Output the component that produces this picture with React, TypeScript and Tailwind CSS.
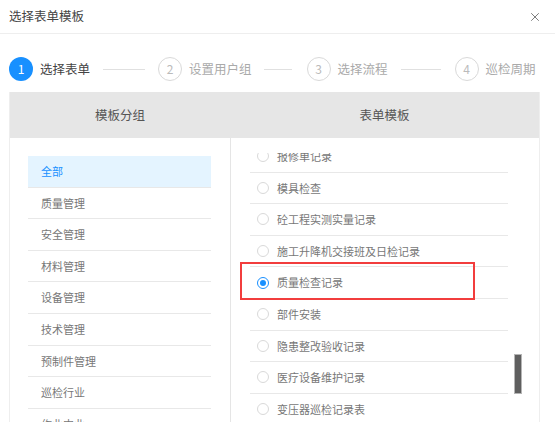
import { X } from "lucide-react";

const groups = ["全部", "质量管理", "安全管理", "材料管理", "设备管理", "技术管理", "预制件管理", "巡检行业", "作业内业"];

const templates = [
  "报修单记录",
  "模具检查",
  "砼工程实测实量记录",
  "施工升降机交接班及日检记录",
  "质量检查记录",
  "部件安装",
  "隐患整改验收记录",
  "医疗设备维护记录",
  "变压器巡检记录表",
  "消防设施检查",
];

const Step = ({ n, label, active }: { n: number; label: string; active?: boolean }) => (
  <div className="flex items-center gap-[7px]">
    <div
      className={
        active
          ? "w-[24px] h-[24px] rounded-full bg-[#1890ff] text-white flex items-center justify-center text-[12px]"
          : "w-[24px] h-[24px] rounded-full border border-[#d9d9d9] text-[#bbb] flex items-center justify-center text-[12px]"
      }
    >
      {n}
    </div>
    <span className={active ? "text-[12.5px] text-[#444]" : "text-[12.5px] text-[#aaa]"}>{label}</span>
  </div>
);

export default function App() {
  return (
    <div
      className="w-[555px] h-[422px] bg-white overflow-hidden"
      style={{ fontFamily: '"Noto Sans CJK SC", "Noto Sans", sans-serif' }}
    >
      {/* 标题栏 */}
      <div className="h-[34px] flex items-center justify-between pl-[9px] pr-[13px] border-b border-[#eee]">
        <span className="text-[12.5px] text-[#444]">选择表单模板</span>
        <X className="w-[14px] h-[14px] text-[#555]" strokeWidth={1.3} />
      </div>

      {/* 步骤条 */}
      <div className="flex items-center pl-[9px] pt-[23px] pb-[11px]">
        <Step n={1} label="选择表单" active />
        <div className="w-[42px] h-px bg-[#e0e0e0] ml-[13px] mr-[13px]" />
        <Step n={2} label="设置用户组" />
        <div className="w-[28px] h-px bg-[#e0e0e0] ml-[12px] mr-[15px]" />
        <Step n={3} label="选择流程" />
        <div className="w-[40px] h-px bg-[#e0e0e0] ml-[13px] mr-[14px]" />
        <Step n={4} label="巡检周期" />
      </div>

      {/* 面板 */}
      <div className="ml-[9px] w-[531px] h-[330px] border-l border-r border-[#eee] flex flex-col">
        <div className="h-[46px] bg-[#e6e6e6] flex shrink-0">
          <div className="w-[220px] flex items-center justify-center text-[12.5px] text-[#555]">模板分组</div>
          <div className="flex-1 flex items-center justify-center text-[12.5px] text-[#555]">表单模板</div>
        </div>
        <div className="flex flex-1 min-h-0">
          {/* 左侧分组 */}
          <div className="w-[221px] border-r border-[#e5e5e5] pt-[18px] pl-[18px] pr-[19px] overflow-hidden">
            {groups.map((g, i) => (
              <div
                key={g}
                className={
                  i === 0
                    ? "h-[31.6px] flex items-center pl-[13px] text-[11px] text-[#1890ff] bg-[#e4f4ff] border-b border-[#e8e8e8]"
                    : "h-[31.6px] flex items-center pl-[13px] text-[11px] text-[#777] border-b border-[#e8e8e8]"
                }
              >
                {g}
              </div>
            ))}
          </div>

          {/* 右侧模板 */}
          <div className="flex-1 relative pt-[15px]">
            <div className="h-full overflow-hidden pl-[19px] pr-[31px]">
              <div className="-mt-[12px]">
                {templates.map((t) => {
                  const sel = t === "质量检查记录";
                  return (
                    <div
                      key={t}
                      className="relative h-[31.6px] flex items-center gap-[8px] pl-[7px] border-b border-[#e8e8e8] text-[11px] text-[#777]"
                    >
                      {sel ? (
                        <span className="w-[12px] h-[12px] rounded-full border border-[#1890ff] flex items-center justify-center">
                          <span className="w-[6px] h-[6px] rounded-full bg-[#1890ff]" />
                        </span>
                      ) : (
                        <span className="w-[12px] h-[12px] rounded-full border border-[#d9d9d9]" />
                      )}
                      <span>{t}</span>
                      {sel && (
                        <div className="absolute left-[-10px] top-[-5px] w-[235px] h-[38px] border-2 border-[#f23d3d]" />
                      )}
                    </div>
                  );
                })}
              </div>
            </div>
            {/* 滚动条 */}
            <div className="absolute left-[283px] top-[216px] w-[8px] h-[40px] bg-[#5f5f5f] border border-[#b5b5b5]" />
          </div>
        </div>
      </div>
    </div>
  );
}
